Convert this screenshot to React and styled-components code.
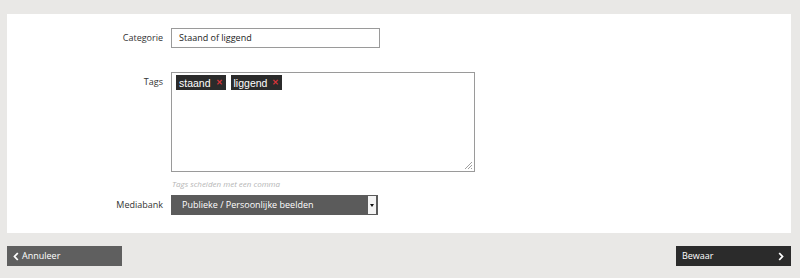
import React from 'react';
import styled, { createGlobalStyle } from 'styled-components';

const GlobalStyle = createGlobalStyle`
  html, body {
    margin: 0;
    padding: 0;
    background: #e9e8e6;
    font-family: "Open Sans", "Liberation Sans", sans-serif;
  }
`;

const Page = styled.div`
  width: 800px;
  height: 278px;
  padding: 14px 9px 0 7px;
  box-sizing: border-box;
`;

const Panel = styled.div`
  background: #fff;
  height: 219px;
  box-sizing: border-box;
  padding-top: 14px;
`;

const Row = styled.div`
  display: flex;
  align-items: flex-start;
  margin-bottom: ${p => p.gap || 0}px;
`;

const Label = styled.label`
  width: 164px;
  text-align: right;
  padding-right: 8px;
  box-sizing: border-box;
  font-size: 9px;
  color: #333;
  line-height: 20px;
  flex-shrink: 0;
`;

const TextInput = styled.div`
  width: 209px;
  height: 20px;
  box-sizing: border-box;
  border: 1px solid #9a9a9a;
  font-size: 9px;
  line-height: 18px;
  padding-left: 7px;
  color: #222;
`;

const TagBox = styled.div`
  position: relative;
  width: 304px;
  height: 100px;
  box-sizing: border-box;
  border: 1px solid #9a9a9a;
  padding: 2px 4px;
  display: flex;
  gap: 5px;
  align-items: flex-start;
`;

const Chip = styled.span`
  display: inline-flex;
  align-items: center;
  background: #2b2b2b;
  color: #fff;
  font-family: "Liberation Sans", Arial, sans-serif;
  font-size: 10.5px;
  height: 15px;
  padding: 0 3px 0 3px;
  gap: 5px;
`;

const Remove = styled.span`
  color: #d9343a;
  font-size: 8px;
  font-weight: bold;
`;

const Grip = styled.svg`
  position: absolute;
  right: 1px;
  bottom: 1px;
`;

const Hint = styled.div`
  font-size: 8px;
  font-style: italic;
  color: #b5b5b5;
  margin: 6px 0 0 165px;
  height: 17px;
  line-height: 12px;
`;

const Select = styled.div`
  width: 207px;
  height: 20px;
  box-sizing: border-box;
  background: #5b5b5b;
  color: #fff;
  font-size: 9px;
  line-height: 20px;
  padding-left: 11px;
  display: flex;
  justify-content: space-between;
`;

const Arrow = styled.span`
  width: 8px;
  margin: 1px 2px 1px 0;
  background: #f4f4f4;
  display: flex;
  align-items: center;
  justify-content: center;
  &::after {
    content: '';
    border-left: 2.5px solid transparent;
    border-right: 2.5px solid transparent;
    border-top: 3px solid #111;
  }
`;

const Footer = styled.div`
  display: flex;
  justify-content: space-between;
  margin-top: 13px;
`;

const Button = styled.div`
  width: 115px;
  height: 20px;
  box-sizing: border-box;
  background: ${p => (p.primary ? '#2b2b2b' : '#5f5f5f')};
  color: #fff;
  font-size: 9px;
  line-height: 20px;
  display: flex;
  align-items: center;
  justify-content: space-between;
  padding: 0 7px 0 6px;
`;

const Side = styled.span`
  display: flex;
  align-items: center;
  gap: 3px;
`;

const Chevron = ({ dir }) => (
  <svg width="6" height="9" viewBox="0 0 6 9">
    <path
      d={dir === 'left' ? 'M4.8 1 L1.5 4.5 L4.8 8' : 'M1.2 1 L4.5 4.5 L1.2 8'}
      fill="none"
      stroke="#fff"
      strokeWidth="1.8"
    />
  </svg>
);

export default function App() {
  return (
    <Page>
      <GlobalStyle />
      <Panel>
        <Row gap={24}>
          <Label>Categorie</Label>
          <TextInput>Staand of liggend</TextInput>
        </Row>
        <Row>
          <Label>Tags</Label>
          <TagBox>
            <Chip>staand <Remove>✕</Remove></Chip>
            <Chip>liggend <Remove>✕</Remove></Chip>
            <Grip width="9" height="9" viewBox="0 0 9 9">
              <path d="M8 1 L1 8 M8 4 L4 8 M8 7 L7 8" stroke="#888" strokeWidth="0.8" />
            </Grip>
          </TagBox>
        </Row>
        <Hint>Tags scheiden met een comma</Hint>
        <Row>
          <Label>Mediabank</Label>
          <Select>
            Publieke / Persoonlijke beelden
            <Arrow />
          </Select>
        </Row>
      </Panel>
      <Footer>
        <Button>
          <Side><Chevron dir="left" /> Annuleer</Side>
        </Button>
        <Button primary>
          <span>Bewaar</span>
          <Chevron dir="right" />
        </Button>
      </Footer>
    </Page>
  );
}
